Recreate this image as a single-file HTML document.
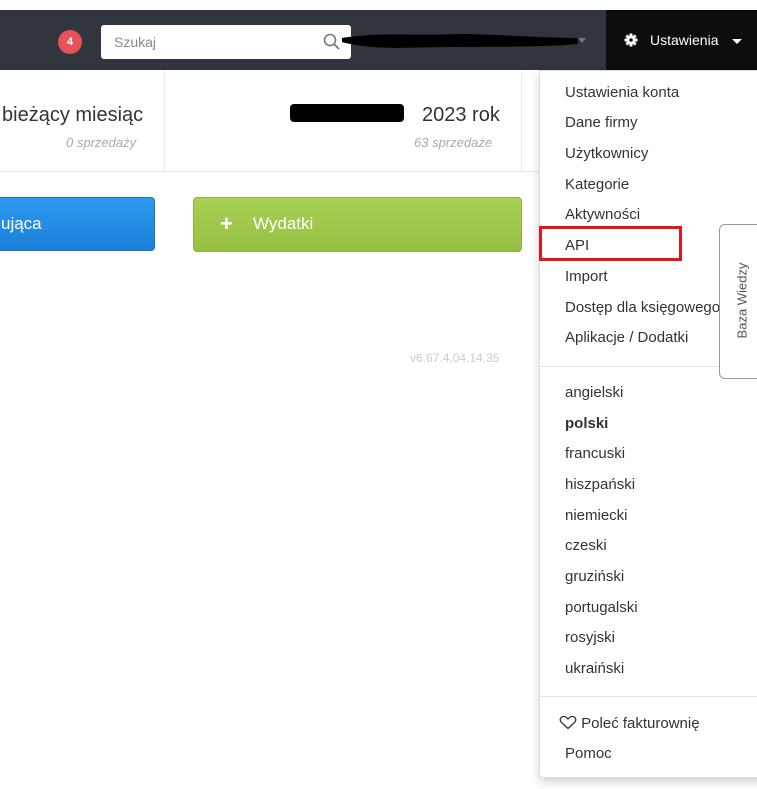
<!DOCTYPE html><html><head><meta charset="utf-8"><style>
body{margin:0;width:757px;height:789px;overflow:hidden;background:#fff;font-family:"Liberation Sans",sans-serif;position:relative;color:#333}
.a{position:absolute}
.hdr{left:0;top:10px;width:757px;height:60px;background:#31363e}
.set{left:606px;top:10px;width:151px;height:60px;background:#0d0d0d;color:#fff;font-size:14px}
.dd{left:539px;top:70px;width:230px;height:706px;background:#fff;border:1px solid #ddd;border-radius:0 0 4px 4px;box-shadow:0 4px 10px rgba(0,0,0,.18)}
.it{position:absolute;left:25px;font-size:15px;color:#333;white-space:nowrap}
.hr{position:absolute;left:0;width:230px;height:1px;background:#e3e3e3}
</style></head><body>
<div class="a hdr"></div>
<div class="a" style="left:58px;top:30px;width:24px;height:24px;border-radius:50%;background:#e8505b;color:#fff;font-size:11px;font-weight:bold;text-align:center;line-height:24px">4</div>
<div class="a" style="left:101px;top:25px;width:250px;height:34px;background:#fff;border-radius:3px"><span class="a" style="left:13px;top:9px;font-size:14px;color:#888">Szukaj</span>
<svg class="a" style="left:222px;top:8px" width="18" height="18"><circle cx="7" cy="7" r="5.5" fill="none" stroke="#777" stroke-width="1.6"/><line x1="11" y1="11" x2="16" y2="16" stroke="#777" stroke-width="1.8"/></svg></div>
<svg class="a" style="left:338px;top:26px" width="250" height="30"><path d="M4 12 C40 6 80 10 120 8 C160 8 200 12 240 12 L240 18 C200 22 120 20 60 22 C30 22 10 18 4 16Z" fill="#000"/></svg>
<div class="a" style="left:578px;top:38px;border:4px solid transparent;border-top:5px solid #777"></div>
<div class="a set"><svg class="a" style="left:18px;top:23px" width="14" height="14" viewBox="0 0 14 14"><g fill="#fff"><rect x="5.5" y="0.5" width="3" height="13" rx="0.5"/><rect x="5.5" y="0.5" width="3" height="13" rx="0.5" transform="rotate(45 7 7)"/><rect x="5.5" y="0.5" width="3" height="13" rx="0.5" transform="rotate(90 7 7)"/><rect x="5.5" y="0.5" width="3" height="13" rx="0.5" transform="rotate(135 7 7)"/><circle cx="7" cy="7" r="4.5"/></g><circle cx="7" cy="7" r="1.8" fill="#0d0d0d"/></svg><span class="a" style="left:44px;top:22px">Ustawienia</span><div class="a" style="left:126px;top:29px;border:5px solid transparent;border-top:5px solid #fff"></div></div>
<div class="a" style="left:0;top:171px;width:540px;height:1px;background:#e8e8e8"></div>
<div class="a" style="left:164px;top:70px;width:1px;height:101px;background:#e8e8e8"></div>
<div class="a" style="left:521px;top:70px;width:1px;height:101px;background:#e8e8e8"></div>
<div class="a" style="left:2px;top:104px;font-size:20px;color:#333">bieżący miesiąc</div>
<div class="a" style="left:66px;top:135px;font-size:13px;color:#aaa;font-style:italic">0 sprzedaży</div>
<div class="a" style="left:290px;top:104px;width:114px;height:18px;background:#000;border-radius:4px"></div>
<div class="a" style="left:422px;top:104px;font-size:20px;color:#333">2023 rok</div>
<div class="a" style="left:414px;top:135px;font-size:13px;color:#aaa;font-style:italic">63 sprzedaże</div>
<div class="a" style="left:-5px;top:197px;width:160px;height:54px;background:linear-gradient(#2d9af0,#1a7fd8);border-radius:4px;border:1px solid #1a72c4;box-sizing:border-box"><span class="a" style="left:5px;top:16px;color:#fff;font-size:17px">ująca</span></div>
<div class="a" style="left:193px;top:197px;width:329px;height:55px;background:linear-gradient(#a8d054,#96c043);border-radius:4px;border:1px solid #8cb53c;box-sizing:border-box"><span class="a" style="left:26px;top:13px;color:#fff;font-size:22px;font-weight:bold">+</span><span class="a" style="left:59px;top:16px;color:#fff;font-size:17px">Wydatki</span></div>
<div class="a" style="left:410px;top:351px;font-size:12px;color:#ccc">v6.67.4.04.14.35</div>
<div class="a dd">
<div class="it" style="top:13px">Ustawienia konta</div>
<div class="it" style="top:43px">Dane firmy</div>
<div class="it" style="top:74px">Użytkownicy</div>
<div class="it" style="top:105px">Kategorie</div>
<div class="it" style="top:135px">Aktywności</div>
<div class="it" style="top:166px">API</div>
<div class="it" style="top:197px">Import</div>
<div class="it" style="top:228px">Dostęp dla księgowego</div>
<div class="it" style="top:258px">Aplikacje / Dodatki</div>
<div class="hr" style="top:295px"></div>
<div class="it" style="top:313px">angielski</div>
<div class="it" style="top:344px;font-weight:bold">polski</div>
<div class="it" style="top:374px">francuski</div>
<div class="it" style="top:405px">hiszpański</div>
<div class="it" style="top:436px">niemiecki</div>
<div class="it" style="top:466px">czeski</div>
<div class="it" style="top:497px">gruziński</div>
<div class="it" style="top:528px">portugalski</div>
<div class="it" style="top:558px">rosyjski</div>
<div class="it" style="top:589px">ukraiński</div>
<div class="hr" style="top:625px"></div>
<div class="it" style="top:644px;left:19px"><svg width="18" height="15" viewBox="0 0 18 15" style="vertical-align:-2px"><path d="M9 13.5 L2.5 7.5 C0 5 1.5 1.5 4.8 1.5 C6.8 1.5 8 3 9 4 C10 3 11.2 1.5 13.2 1.5 C16.5 1.5 18 5 15.5 7.5 Z" fill="none" stroke="#333" stroke-width="1.3"/></svg> Poleć fakturownię</div>
<div class="it" style="top:674px">Pomoc</div>
</div>
<div class="a" style="left:539px;top:226px;width:143px;height:35px;border:3px solid #e8141c;box-sizing:border-box"></div>
<div class="a" style="left:719px;top:224px;width:45px;height:155px;background:rgba(255,255,255,.85);border:1px solid #999;border-radius:6px;box-sizing:border-box"><div class="a" style="left:-28px;top:68px;width:100px;transform:rotate(-90deg);font-size:13px;color:#555;text-align:center">Baza Wiedzy</div></div>
</body></html>
